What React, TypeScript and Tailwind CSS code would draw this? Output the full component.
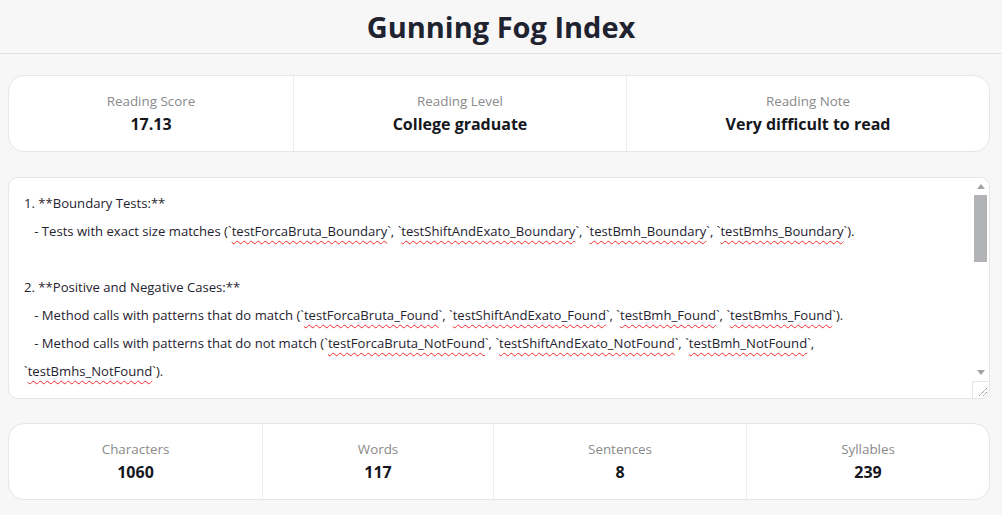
import React from "react";

const sampleText = `1. **Boundary Tests:**
   - Tests with exact size matches (\`testForcaBruta_Boundary\`, \`testShiftAndExato_Boundary\`, \`testBmh_Boundary\`, \`testBmhs_Boundary\`).

2. **Positive and Negative Cases:**
   - Method calls with patterns that do match (\`testForcaBruta_Found\`, \`testShiftAndExato_Found\`, \`testBmh_Found\`, \`testBmhs_Found\`).
   - Method calls with patterns that do not match (\`testForcaBruta_NotFound\`, \`testShiftAndExato_NotFound\`, \`testBmh_NotFound\`, \`testBmhs_NotFound\`).

3. **Edge Cases:**
   - Empty text and empty pattern inputs are checked for every algorithm.
   - Patterns longer than the text return no match.

4. **Performance:**
   - Large inputs are used to compare the running time of each search method.`;

const topStats = [
  { label: "Reading Score", value: "17.13" },
  { label: "Reading Level", value: "College graduate" },
  { label: "Reading Note", value: "Very difficult to read" },
];

const bottomStats = [
  { label: "Characters", value: "1060" },
  { label: "Words", value: "117" },
  { label: "Sentences", value: "8" },
  { label: "Syllables", value: "239" },
];

const Stat = ({ label, value }: { label: string; value: string }) => (
  <div className="flex flex-col items-center justify-center pb-[2px] border-r border-[#ececec] last:border-r-0">
    <span className="text-[13.4px] leading-[20px] text-[#8a8a8a]">{label}</span>
    <span className="mt-[2px] text-[16px] leading-[22px] font-bold text-[#15171c]">{value}</span>
  </div>
);

// code names get the red squiggle the browser's spellcheck draws
const renderText = (text: string) =>
  text.split(/(`[^`]+`)/).map((part, i) =>
    part.startsWith("`") ? (
      <React.Fragment key={i}>
        `
        <span className="underline decoration-wavy decoration-[#ee2b2b] decoration-[1px] underline-offset-[4px]">
          {part.slice(1, -1)}
        </span>
        `
      </React.Fragment>
    ) : (
      <React.Fragment key={i}>{part}</React.Fragment>
    )
  );

const FakeScrollbar = () => (
  <div className="pointer-events-none absolute top-0 right-0 bottom-0 w-[17px] flex flex-col bg-white">
    <div className="h-[17px] flex items-center justify-center">
      <svg width="8" height="5" viewBox="0 0 8 5">
        <path d="M0 5 L4 0 L8 5 Z" fill="#a3a3a3" />
      </svg>
    </div>
    <div className="flex-1 px-[2px]">
      <div className="h-[67px] bg-[#b1b3b6]" />
    </div>
    <div className="h-[17px] flex items-center justify-center">
      <svg width="8" height="5" viewBox="0 0 8 5">
        <path d="M0 0 L8 0 L4 5 Z" fill="#a3a3a3" />
      </svg>
    </div>
    <div className="h-[17px] border-t border-l border-[#e6e6e6] flex items-end justify-end p-[2px]">
      <svg width="9" height="9" viewBox="0 0 9 9">
        <path d="M9 1 L1 9 M9 5 L5 9" stroke="#555" strokeWidth="1" strokeDasharray="1 1" />
      </svg>
    </div>
  </div>
);

export default function App() {
  return (
    <div
      className="min-h-screen bg-[#f7f7f7] text-[#1f2330]"
      style={{ fontFamily: '"Segoe UI", "Open Sans", sans-serif' }}>
      <header className="h-[54px] flex items-center justify-center border-b border-[#e2e2e2]">
        <h1 className="text-[29px] font-bold leading-none text-[#1f2330]">Gunning Fog Index</h1>
      </header>

      <main className="pl-[8px] pr-[12px] pt-[21px]">
        <section className="grid grid-cols-[285px_333px_1fr] h-[77px] bg-white border border-[#e6e6e6] rounded-[16px]">
          {topStats.map((s) => (
            <Stat key={s.label} {...s} />
          ))}
        </section>

        <div className="relative mt-[25px] h-[222px] bg-white border border-[#e6e6e6] rounded-[10px] overflow-hidden">
          <div
            contentEditable
            suppressContentEditableWarning
            spellCheck={false}
            className="h-full overflow-y-auto [scrollbar-width:none] pl-[15px] pr-[36px] py-[11px] whitespace-pre-wrap break-words text-[13.1px] leading-[28px] text-[#1f2330] outline-none">
            {renderText(sampleText)}
          </div>
          <FakeScrollbar />
        </div>

        <section className="mt-[24px] grid grid-cols-[254px_231px_253px_1fr] h-[77px] bg-white border border-[#e6e6e6] rounded-[16px]">
          {bottomStats.map((s) => (
            <Stat key={s.label} {...s} />
          ))}
        </section>
      </main>
    </div>
  );
}
